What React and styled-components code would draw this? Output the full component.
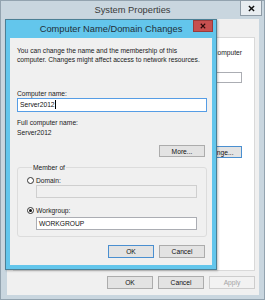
import React from "react";
import styled, { createGlobalStyle } from "styled-components";

const Global = createGlobalStyle`
  html, body { margin: 0; padding: 0; background: #ffffff; }
  body { font-family: "Liberation Sans", Arial, sans-serif; }
  * { box-sizing: border-box; }
`;

const OuterWindow = styled.div`
  position: relative;
  width: 265px;
  height: 300px;
  background: #c9d6df;
  border: 1px solid #93a3af;
  display: flex;
  flex-direction: column;
`;

const TitleBar = styled.div`
  display: grid;
  grid-template-columns: 1fr auto 1fr;
  align-items: start;
  height: ${(p) => p.$h}px;
  flex: none;
`;

const TitleText = styled.div`
  grid-column: 2;
  font-size: 9.3px;
  line-height: ${(p) => p.$h}px;
  color: ${(p) => p.$color};
  white-space: nowrap;
`;

const CloseBtn = styled.div`
  grid-column: 3;
  justify-self: end;
  width: ${(p) => p.$w}px;
  height: ${(p) => p.$h}px;
  margin-top: ${(p) => p.$mt || 0}px;
  margin-right: ${(p) => p.$mr || 0}px;
  background: ${(p) => p.$bg};
  border: 1px solid ${(p) => p.$border};
  display: flex;
  align-items: center;
  justify-content: center;
`;

const OuterBody = styled.div`
  flex: 1;
  margin: 0 5px 4px 6px;
  background: #f0f0f0;
  padding: 18px 4px 6px 6px;
  display: flex;
  flex-direction: column;
  gap: 5px;
`;

const TabPanel = styled.div`
  flex: 1;
  background: #ffffff;
  border: 1px solid #d9d9d9;
  padding: 9.5px 12px 0;
  display: flex;
  flex-direction: column;
  align-items: flex-end;
  overflow: hidden;
`;

const Text = styled.div`
  font-size: 6.7px;
  line-height: 9px;
  color: ${(p) => (p.$muted ? "#a0a0a0" : "#1a1a1a")};
  margin-top: ${(p) => p.$mt || 0}px;
  white-space: nowrap;
`;

const TextBox = styled.div`
  height: ${(p) => p.$h}px;
  width: ${(p) => (p.$w ? `${p.$w}px` : "auto")};
  margin-top: ${(p) => p.$mt || 0}px;
  margin-left: ${(p) => p.$ml || 0}px;
  border: 1px solid
    ${(p) => (p.$focused ? "#569de5" : p.$disabled ? "#cfcfcf" : "#abadb3")};
  background: ${(p) => (p.$disabled ? "#f0f0f0" : "#ffffff")};
  padding: 0 2px;
  display: flex;
  align-items: center;
  font-size: 6.7px;
  color: #111;
  white-space: nowrap;
`;

const Caret = styled.span`
  display: inline-block;
  width: 1px;
  height: 9px;
  background: #000;
  margin-left: 0.5px;
`;

const ButtonRow = styled.div`
  display: flex;
  justify-content: flex-end;
  gap: 5px;
  margin-top: ${(p) => p.$mt || 0}px;
  padding-right: ${(p) => p.$pr || 0}px;
`;

const Button = styled.div`
  width: 46px;
  height: ${(p) => p.$h || 13}px;
  margin-top: ${(p) => p.$mt || 0}px;
  background: ${(p) => (p.$disabled ? "#f2f2f2" : "#e3e3e3")};
  border: 1px solid
    ${(p) => (p.$default ? "#4a8fd0" : p.$disabled ? "#cdcdcd" : "#acacac")};
  display: flex;
  align-items: center;
  justify-content: center;
  font-size: 6.7px;
  color: ${(p) => (p.$disabled ? "#a3a3a3" : "#111")};
  flex: none;
`;

const Dialog = styled.div`
  position: absolute;
  left: 4px;
  top: 18px;
  width: 212px;
  background: #63c6ec;
  border: 1px solid #4b7f95;
  padding: 0 4px 4px;
  box-shadow: 1px 1px 2px rgba(0, 0, 0, 0.25);
  display: flex;
  flex-direction: column;
`;

const DialogContent = styled.div`
  background: #f0f0f0;
  padding: 7.5px 5px 7px 7px;
  display: flex;
  flex-direction: column;
`;

const Group = styled.fieldset`
  margin: 5.5px 0 0;
  padding: 4px 9px 6px;
  border: 1px solid #dcdcdc;
  border-radius: 3px;
  min-inline-size: 0;
  display: flex;
  flex-direction: column;
`;

const GroupLegend = styled.legend`
  margin-left: 5px;
  padding: 0 1px;
  font-size: 6.7px;
  line-height: 9px;
  color: #1a1a1a;
`;

const RadioRow = styled.div`
  display: flex;
  align-items: center;
  gap: 2px;
  height: 9px;
  margin-top: ${(p) => p.$mt || 0}px;
`;

const Radio = styled.span`
  width: 7px;
  height: 7px;
  border-radius: 50%;
  border: 1px solid #333;
  background: #fff;
  display: flex;
  align-items: center;
  justify-content: center;
  flex: none;
  &::after {
    content: "";
    width: 3px;
    height: 3px;
    border-radius: 50%;
    background: ${(p) => (p.$checked ? "#111" : "transparent")};
  }
`;

const CloseGlyph = ({ color, size }) => (
  <svg width={size} height={size} viewBox="0 0 10 10">
    <path d="M2 2 L8 8 M8 2 L2 8" stroke={color} strokeWidth="2" strokeLinecap="square" />
  </svg>
);

export default function App() {
  return (
    <>
      <Global />
      <OuterWindow>
        <TitleBar $h={18}>
          <TitleText $h={18} $color="#3a3a3a">System Properties</TitleText>
          <CloseBtn $w={22} $h={16} $mt={-1} $mr={2} $bg="#e8edf1" $border="#8e9ba6">
            <CloseGlyph color="#111" size={7} />
          </CloseBtn>
        </TitleBar>
        <OuterBody>
          <TabPanel>
            <Text>computer</Text>
            <TextBox $h={11} $w={200} $mt={15.5} />
            <Button $h={12} $mt={63} $default>Change...</Button>
          </TabPanel>
          <ButtonRow>
            <Button>OK</Button>
            <Button>Cancel</Button>
            <Button $disabled>Apply</Button>
          </ButtonRow>
        </OuterBody>

        <Dialog>
          <TitleBar $h={18}>
            <TitleText $h={18} $color="#1f2f38">Computer Name/Domain Changes</TitleText>
            <CloseBtn $w={20} $h={12} $mr={-1} $bg="#c75050" $border="#9a3b3b">
              <CloseGlyph color="#2a0a0a" size={6} />
            </CloseBtn>
          </TitleBar>
          <DialogContent>
            <Text>
              You can change the name and the membership of this
              <br />
              computer. Changes might affect access to network resources.
            </Text>
            <Text $mt={25}>Computer name:</Text>
            <TextBox $h={14} $focused>
              Server2012
              <Caret />
            </TextBox>
            <Text $mt={6}>Full computer name:</Text>
            <Text $mt={1}>Server2012</Text>
            <ButtonRow $mt={8.5} $pr={2}>
              <Button $h={12}>More...</Button>
            </ButtonRow>
            <Group>
              <GroupLegend>Member of</GroupLegend>
              <RadioRow>
                <Radio />
                <Text>Domain:</Text>
              </RadioRow>
              <TextBox $h={13} $ml={9} $mt={0.5} $disabled />
              <RadioRow $mt={7.5}>
                <Radio $checked />
                <Text>Workgroup:</Text>
              </RadioRow>
              <TextBox $h={13} $ml={9} $mt={2.5}>WORKGROUP</TextBox>
            </Group>
            <ButtonRow $mt={8} $pr={2}>
              <Button $default>OK</Button>
              <Button>Cancel</Button>
            </ButtonRow>
          </DialogContent>
        </Dialog>
      </OuterWindow>
    </>
  );
}
